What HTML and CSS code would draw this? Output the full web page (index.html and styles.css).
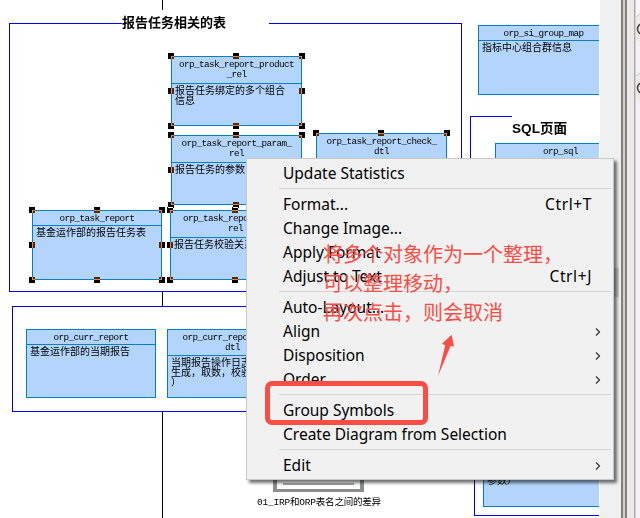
FILE: index.html
```html
<!DOCTYPE html>
<html lang="zh">
<head>
<meta charset="utf-8">
<title>Diagram</title>
<link rel="stylesheet" href="styles.css">
</head>
<body>
<div class="window">
  <main class="canvas">
    <i class="link link-top"></i><i class="link link-main"></i>
    <section class="frame frame-task"></section>
    <h2 class="title title-task">报告任务相关的表</h2>
    <section class="frame frame-curr"></section>
    <section class="frame frame-sql"></section>
    <h2 class="title title-sql">SQL页面</h2>
    <section class="frame frame-low"></section>

    <article class="entity product"><header>orp_task_report_product<br>_rel</header><p>报告任务绑定的多个组合<br>信息</p></article>
    <article class="entity param"><header>orp_task_report_param_<br>rel</header><p>报告任务的参数</p></article>
    <article class="entity check"><header>orp_task_report_check_<br>dtl</header></article>
    <article class="entity report"><header>orp_task_report</header><p>基金运作部的报告任务表</p></article>
    <article class="entity rule"><header>orp_task_report_rule_<br>rel</header><p>报告任务校验关系</p></article>
    <article class="entity curr"><header>orp_curr_report</header><p>基金运作部的当期报告</p></article>
    <article class="entity log"><header>orp_curr_report_log_<br>dtl</header><p>当期报告操作日志（<br>生成，取数，校验<br>）</p></article>
    <article class="entity map"><header>orp_si_group_map</header><p>指标中心组合群信息</p></article>
    <article class="entity sql"><header>orp_sql</header></article>
    <article class="entity params"><p>参数）</p></article>

    <div class="grips product"><i></i><i></i><i></i><i></i><i></i><i></i><i></i><i></i></div>
    <div class="grips param"><i></i><i></i><i></i><i></i><i></i><i></i><i></i><i></i></div>
    <div class="grips check"><i></i><i></i><i></i><i></i><i></i><i></i><i></i><i></i></div>
    <div class="grips report"><i></i><i></i><i></i><i></i><i></i><i></i><i></i><i></i></div>
    <div class="grips rule"><i></i><i></i><i></i><i></i><i></i><i></i><i></i><i></i></div>

    <div class="file"><i></i></div>
    <div class="file-name">01_IRP和ORP表名之间的差异</div>
  </main>
  <div class="scroll"><i></i></div>
  <div class="split"></div>
  <aside class="side">
    <svg width="4" height="518" viewBox="0 0 4 518"><path d="M0 0h4v14L0 18z" fill="#f3f5fa"/><path d="M0 17L4 14v28H0zM0 76l4-3v28H0z" fill="#ececec"/><path d="M0 17l4-3M0 76l4-3" stroke="#c8c8c8"/><circle cx="7" cy="29" r="5.5" fill="none" stroke="#444" stroke-width="1.5"/><circle cx="7" cy="88" r="5.5" fill="none" stroke="#444" stroke-width="1.5"/></svg>
  </aside>
</div>

<nav class="menu">
  <div class="item"><span>Update Statistics</span></div>
  <hr>
  <div class="item"><span>Format...</span><kbd>Ctrl+T</kbd></div>
  <div class="item"><span>Change Image...</span></div>
  <div class="item"><span>Apply Format</span></div>
  <div class="item"><span>Adjust to Text</span><kbd>Ctrl+J</kbd></div>
  <hr>
  <div class="item"><span>Auto-Layout...</span></div>
  <div class="item"><span>Align</span><svg class="more" viewBox="0 0 6 8"><path d="M1 .5L4.5 4 1 7.5"/></svg></div>
  <div class="item"><span>Disposition</span><svg class="more" viewBox="0 0 6 8"><path d="M1 .5L4.5 4 1 7.5"/></svg></div>
  <div class="item"><span>Order</span><svg class="more" viewBox="0 0 6 8"><path d="M1 .5L4.5 4 1 7.5"/></svg></div>
  <hr>
  <div class="item"><span>Group Symbols</span></div>
  <div class="item"><span>Create Diagram from Selection</span></div>
  <hr>
  <div class="item"><span>Edit</span><svg class="more" viewBox="0 0 6 8"><path d="M1 .5L4.5 4 1 7.5"/></svg></div>
</nav>

<div class="note">将多个对象作为一个整理，<br>可以整理移动，<br>再次点击，则会取消</div>
<div class="mark"></div>
<svg class="arrow" viewBox="0 0 20 46"><path d="M14.6 .8L5 9.8l3.2 1.4L1 42l12.500-30 3.500 .6z"/></svg>
</body>
</html>
```

FILE: styles.css
```css
* { box-sizing: border-box; }
body { margin: 0; width: 640px; height: 518px; overflow: hidden; position: relative; background: #fff; color: #000; }
h2, p { margin: 0; }

.window { display: flex; height: 518px; }
.canvas { position: relative; isolation: isolate; width: 599px; margin-right: 1px; overflow: hidden; background: #fff; }
.scroll { width: 21px; background: #f0f0f0; padding: 268px 2px 0 0; }
.scroll i { display: block; height: 29px; background: #cdcdcd; margin-left: 1px; }
.split { width: 15px; background: linear-gradient(90deg, #808080 2px, #d4d0c8 2px 4px, #808080 4px 6px, #ebe9e7 6px 13px, #aaa 13px 14px, #d4d0c8 14px); }
.side { flex: 1; background: #eff2f9; overflow: hidden; }
.side svg { display: block; }

.link { position: absolute; left: 162px; width: 1px; background: #000; }
.link-top { top: 0; height: 10px; }
.link-main { top: 292px; height: 226px; }
.frame { position: absolute; border: 1px solid #0000e0; background: #fff; }
.frame-task { left: 9px; top: 23px; width: 453px; height: 269px; }
.frame-curr { left: 12px; top: 306px; width: 450px; height: 106px; }
.frame-sql { left: 470px; top: 116px; width: 150px; height: 180px; }
.frame-low { left: 474px; top: 380px; width: 150px; height: 136px; }
.title { position: absolute; background: #fff; font: bold 13px/16px "Liberation Sans", "Noto Sans CJK SC", sans-serif; white-space: nowrap; }
.title-task { left: 122px; top: 15px; width: 147px; }
.title-sql { left: 512px; top: 113px; width: 90px; height: 26px; padding-top: 8px; font-size: 13.6px; }

.entity, .grips { position: absolute; width: 131px; height: 70px; }
.entity { border: 1px solid #0080c0; background: #b3d5fb; font: 10px/10px "Liberation Mono", "Noto Sans CJK SC", monospace; white-space: nowrap; }
.entity header { padding: 3px 0 1px; text-align: center; font-size: 9.3px; letter-spacing: -.58px; border-bottom: 1px solid #0080c0; }
.entity p { padding: 3px 3px; }
.product { left: 171px; top: 56px; }
.param { left: 171px; top: 135px; }
.check { left: 316px; top: 133px; }
.report { left: 32px; top: 210px; width: 130px; }
.rule { left: 170px; top: 210px; }
.curr { left: 26px; top: 329px; width: 130px; height: 69px; }
.log { left: 167px; top: 329px; height: 69px; }
.map { left: 478px; top: 25px; }
.sql { left: 495px; top: 143px; }
.params { left: 483px; top: 437px; }
.params p { padding-top: 39px; }
.product header, .param header, .rule header { height: 27px; }
.log header { height: 26px; }

.grips i { position: absolute; width: 6px; height: 6px; margin: -3px; background: #fff; mix-blend-mode: difference; }
.grips i:nth-child(1) { left: 0; top: 0; }
.grips i:nth-child(2) { left: 65px; top: 0; }
.grips i:nth-child(3) { left: 100%; top: 0; }
.grips i:nth-child(4) { left: 0; top: 35px; }
.grips i:nth-child(5) { left: 100%; top: 35px; }
.grips i:nth-child(6) { left: 0; top: 100%; }
.grips i:nth-child(7) { left: 65px; top: 100%; }
.grips i:nth-child(8) { left: 100%; top: 100%; }

.file { position: absolute; left: 273px; top: 440px; width: 91px; height: 52px; border: 4px solid #8a8e90; border-width: 4px 4px 3px; padding: 39px 6px 0; background: #fff; }
.file i { display: block; height: 2px; background: #a8a8a8; }
.file-name { position: absolute; left: 257px; top: 497px; font: 9.5px/12px "Liberation Mono", "Noto Sans CJK SC", monospace; letter-spacing: -.2px; white-space: nowrap; }

.menu { position: absolute; left: 246px; top: 158px; width: 368px; height: 322px; padding: 3px 2px; border: 1px solid #c8c8c8; background: #f1f1f1; box-shadow: 3px 3px 3px rgba(0,0,0,.55); font: 15.5px/22px "Noto Sans", sans-serif; }
.item { display: flex; align-items: center; height: 24px; padding: 0 10px 0 34px; white-space: nowrap; }
.item span { flex: 1; padding-bottom: 2px; }
.item kbd { font: inherit; margin-right: 9px; padding-bottom: 2px; letter-spacing: .6px; }
.more { width: 6px; height: 8px; fill: none; stroke: #333; stroke-width: 1.2; }
.menu hr { height: 1px; margin: 2px 0 4px 30px; border: 0; background: #d5d5d5; }

.note { position: absolute; left: 323px; top: 238.500px; font: 20px/29px "Noto Sans CJK SC", sans-serif; color: #fa4d45; white-space: nowrap; }
.mark { position: absolute; left: 265px; top: 381px; width: 163px; height: 44px; border: 5px solid #fa4d45; border-radius: 7px; }
.arrow { position: absolute; left: 437px; top: 334px; width: 20px; height: 46px; fill: #fa4d45; }
```
